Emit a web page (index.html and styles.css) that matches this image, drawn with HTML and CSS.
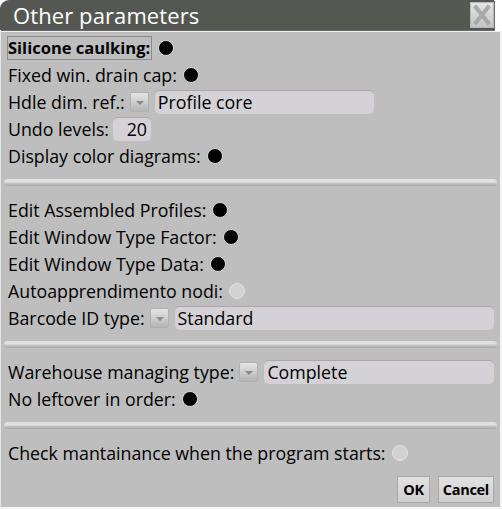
FILE: index.html
```html
<!DOCTYPE html>
<html>
<head>
<meta charset="utf-8">
<link rel="stylesheet" href="styles.css">
</head>
<body>
<div class="win">
  <div class="titlebar">
    <div class="title">Other parameters</div>
    <div class="close">
      <svg width="24" height="24" viewBox="0 0 24 24"><path d="M4 2 L20 22 M20 2 L4 22" stroke="#a9a9a9" stroke-width="4.5" fill="none"/></svg>
    </div>
  </div>
  <div class="body">
    <div class="row"><span class="focus">Silicone caulking:</span><span class="radio on"></span></div>
    <div class="row">Fixed win. drain cap:<span class="radio on"></span></div>
    <div class="row">Hdle dim. ref.:<span class="drop"></span><span class="field w-profile">Profile core</span></div>
    <div class="row">Undo levels:<span class="field num">20</span></div>
    <div class="row">Display color diagrams:<span class="radio on"></span></div>
    <div class="sep"></div>
    <div class="row">Edit Assembled Profiles:<span class="radio on"></span></div>
    <div class="row">Edit Window Type Factor:<span class="radio on"></span></div>
    <div class="row">Edit Window Type Data:<span class="radio on"></span></div>
    <div class="row">Autoapprendimento nodi:<span class="radio"></span></div>
    <div class="row">Barcode ID type:<span class="drop"></span><span class="field grow">Standard</span></div>
    <div class="sep"></div>
    <div class="row">Warehouse managing type:<span class="drop"></span><span class="field grow">Complete</span></div>
    <div class="row">No leftover in order:<span class="radio on"></span></div>
    <div class="sep"></div>
    <div class="row">Check mantainance when the program starts:<span class="radio"></span></div>
    <div class="buttons">
      <span class="btn">OK</span>
      <span class="btn">Cancel</span>
    </div>
  </div>
</div>
</body>
</html>
```
FILE: styles.css
```css
html, body {
  margin: 0;
  padding: 0;
  background: #ffffff;
}
body {
  font-family: "Open Sans", "Noto Sans", sans-serif;
  color: #000;
}
.win {
  width: 502px;
  height: 509px;
  display: flex;
  flex-direction: column;
}
.titlebar {
  height: 30px;
  margin-right: 8px;
  background: #555753;
  border-radius: 9px 0 0 0;
  display: flex;
  align-items: center;
  justify-content: space-between;
  box-shadow: 1px 1px 0 #6a6a6a;
}
.title {
  color: #ffffff;
  font-size: 22px;
  padding-left: 13px;
  line-height: 30px;
  letter-spacing: 0.1px;
}
.close {
  width: 24px;
  height: 26px;
  background: linear-gradient(#e4e4e4, #c4c4c4);
  border: 1px solid #b8b8b8;
  box-sizing: border-box;
  display: flex;
  align-items: center;
  justify-content: center;
}
.body {
  margin-top: 1px;
  border-top: 1px solid #f0f0f0;
  border-left: 1px solid #e6e6e6;
  border-right: 2px solid #f4f4f4;
  border-bottom: 2px solid #f4f4f4;
  background: #bebebe;
  flex: 1;
  padding: 2px 6px 0 7px;
  display: flex;
  flex-direction: column;
}
.row {
  height: 27px;
  display: flex;
  align-items: center;
  font-size: 17.8px;
  white-space: nowrap;
}
.focus {
  font-weight: bold;
  font-size: 16.5px;
  border: 1px solid #8c8c8c;
  padding: 1px 1px 1px 0;
  margin-left: -1px;
  line-height: 20px;
}
.radio {
  width: 16px;
  height: 16px;
  box-sizing: border-box;
  border-radius: 50%;
  border: 1px solid #e2e2e2;
  background: #d2d2d2;
  margin-left: 6px;
  flex: none;
}
.radio.on {
  background: #000;
  border-color: #d8d8d8;
}
.drop {
  width: 19px;
  height: 20px;
  box-sizing: border-box;
  margin-left: 5px;
  background: linear-gradient(#e6e6e6, #b4b4b4);
  border: 1px solid #b0b0b0;
  border-radius: 2px;
  position: relative;
  flex: none;
}
.drop::after {
  content: "";
  position: absolute;
  left: 5px;
  top: 8px;
  border-left: 4px solid transparent;
  border-right: 4px solid transparent;
  border-top: 4px solid #8a8a8a;
}
.field {
  height: 24px;
  box-sizing: border-box;
  background: #d4d2d6;
  border-radius: 5px;
  border-top: 1px solid #a8a8a8;
  margin-left: 6px;
  padding-left: 3px;
  line-height: 22px;
  font-size: 17.8px;
}
.w-profile { width: 219px; flex: none; }
.num {
  width: 38px;
  margin-left: 4px;
  text-align: right;
  padding-right: 4px;
  flex: none;
}
.grow { flex: 1; }
.sep {
  height: 7px;
  margin: 10px -3px 10px -4px;
  border-radius: 4px;
  background: linear-gradient(#dedede 0, #e2e2e2 40%, #c6c6c6 60%, #a6a6a6 100%);
}
.buttons {
  margin-top: 10px;
  display: flex;
  justify-content: flex-end;
  gap: 8px;
}
.btn {
  height: 27px;
  box-sizing: border-box;
  padding: 0 4px;
  font-weight: bold;
  font-size: 14.5px;
  line-height: 25px;
  background: linear-gradient(#e2e2e2, #cfcfcf);
  border: 1px solid #a8a8a8;
  letter-spacing: -0.3px;
}
.btn:first-child {
  padding: 0 5px;
}
```
